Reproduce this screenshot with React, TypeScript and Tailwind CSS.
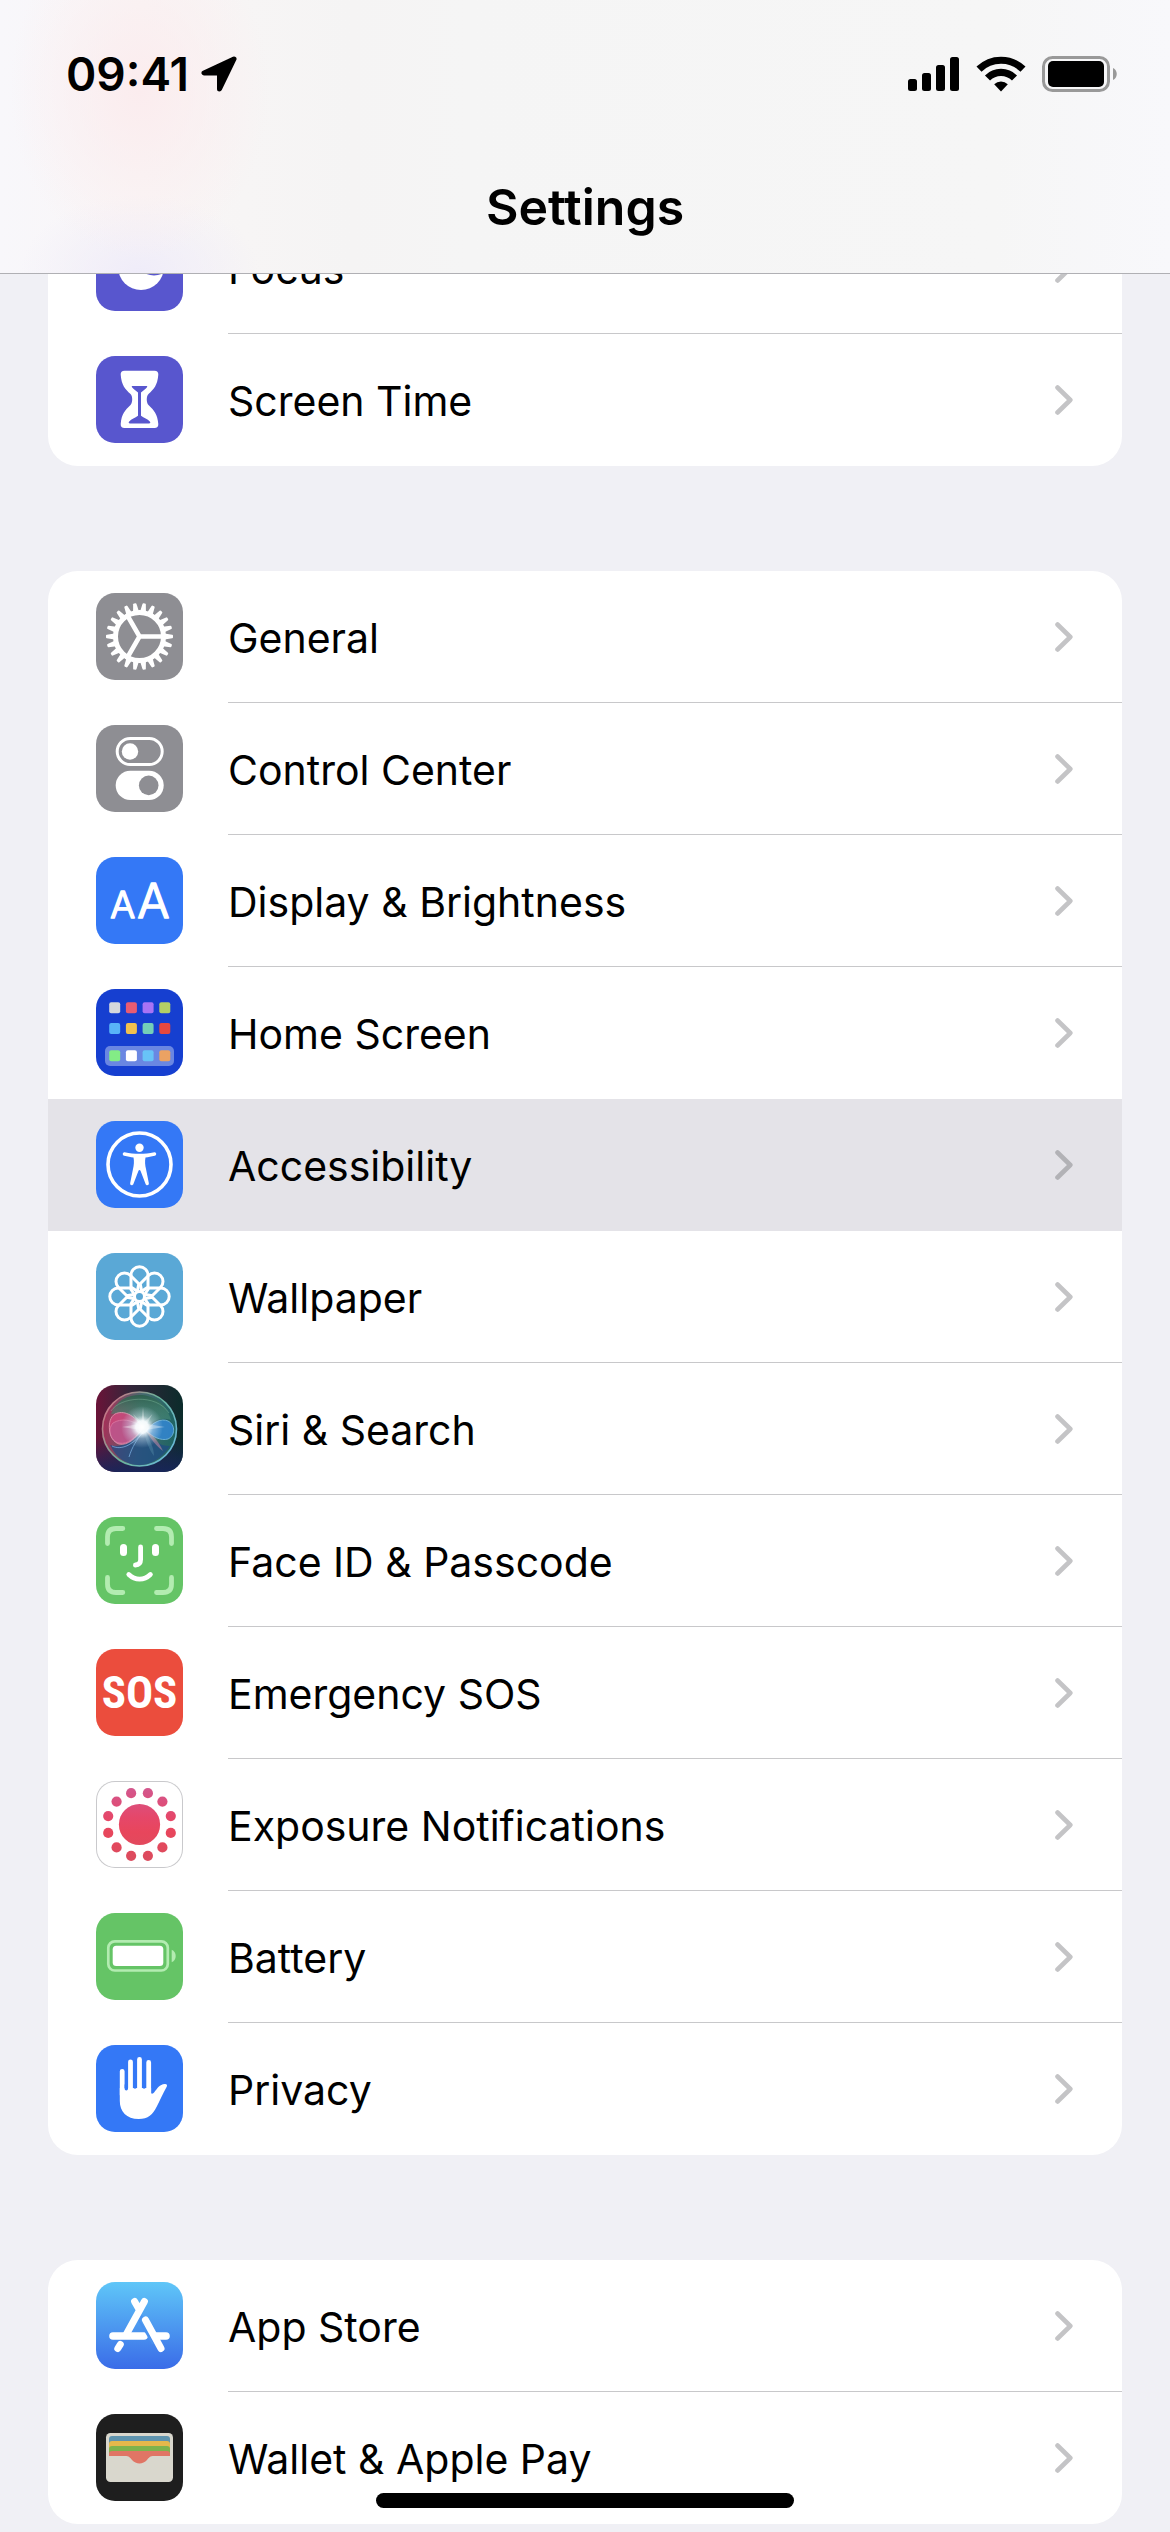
import type { ReactNode } from "react";

type Row = {
  label: string;
  icon: ReactNode;
  pressed?: boolean;
  divider?: boolean;
};

const TEETH = Array.from({ length: 22 }, (_, i) => (i * 360) / 22);
const PETALS = [0, 45, 90, 135, 180, 225, 270, 315];
const DOTS = Array.from({ length: 12 }, (_, i) => ((15 + i * 30) * Math.PI) / 180);

const homeTiles = [
  ["#d5d8dc", "#e85c72", "#a873f5", "#b3cf66"],
  ["#58b4f8", "#f2c14e", "#74cfb8", "#e5483f"],
  ["#83ec86", "#ffffff", "#68c3f7", "#eba263"],
];

// Every icon is drawn on an 87 unit tile
function Tile({ fill, children }: { fill: string; children?: ReactNode }) {
  return (
    <svg viewBox="0 0 87 87" className="mt-[22px] size-[87px] shrink-0" aria-hidden="true">
      <rect width="87" height="87" rx="19" fill={fill} />
      {children}
    </svg>
  );
}

function FocusIcon() {
  return (
    <Tile fill="#5856ce">
      <circle cx="45" cy="43" r="23" fill="#fff" />
      <circle cx="58" cy="32" r="19.5" fill="#5856ce" />
    </Tile>
  );
}

function ScreenTimeIcon() {
  return (
    <Tile fill="#5856ce">
      <path
        fill="#fff"
        d="M28.5 14.7h30c2.600 0 4 1.500 3.800 4C61.500 29 58 33 52.500 38c-2.300 2.200-2.300 8.700 0 10.900C58 54 61.500 58 62.300 68c.2 2.600-1.200 4-3.800 4h-30c-2.600 0-4-1.400-3.800-4C25.500 58 29 54 34.500 48.900c2.300-2.200 2.300-8.700 0-10.900C29 33 25.500 29 24.700 18.700c-.2-2.500 1.200-4 3.800-4z"
      />
      <path
        fill="#5856ce"
        d="M36.500 30h14c.8 0 1 .7.500 1.300-1.800 2.200-4 3.700-6 5.200v23.200c3 2 6.500 3.300 8.800 5.800.9 1 .5 2-.8 2H34c-1.300 0-1.700-1-.8-2 2.300-2.500 5.800-3.800 8.800-5.800V36.500c-2-1.500-4.200-3-6-5.200-.5-.6-.3-1.300.5-1.300z"
      />
    </Tile>
  );
}

function GeneralIcon() {
  return (
    <Tile fill="#8e8e93">
      <g fill="#fff">
        {TEETH.map((deg) => (
          <path key={deg} d="M68.500 40.600l7.700 1.200q.8.200.8 1v1.400q0 .8-.8 1l-7.700 1.200z" transform={`rotate(${deg} 43.500 43.500)`} />
        ))}
      </g>
      <g fill="none" stroke="#fff" strokeWidth="4.600">
        <circle cx="43.500" cy="43.500" r="24" strokeWidth="5" />
        <path d="M43.500 43.500H67M43.500 43.500L31.700 23M43.500 43.500L31.700 64" />
      </g>
    </Tile>
  );
}

function ControlCenterIcon() {
  return (
    <Tile fill="#8e8e93">
      <rect x="21.200" y="13.500" width="45" height="26" rx="13" fill="none" stroke="#fff" strokeWidth="3" />
      <circle cx="34" cy="26.500" r="8.200" fill="#fff" />
      <rect x="19.700" y="45.700" width="48" height="29.300" rx="14.600" fill="#fff" />
      <circle cx="52.700" cy="60.400" r="9.800" fill="#8e8e93" />
    </Tile>
  );
}

function DisplayIcon() {
  return (
    <Tile fill="#3478f6">
      <g
        fill="#fff"
        stroke="#fff"
        strokeWidth="1.600"
        strokeLinejoin="round"
        textAnchor="middle"
        fontWeight="300"
        fontFamily="Inter, sans-serif"
      >
        <text x="26.800" y="61" fontSize="37">A</text>
        <text x="57.300" y="61" fontSize="48">A</text>
      </g>
    </Tile>
  );
}

function HomeScreenIcon() {
  return (
    <Tile fill="#163fd0">
      <rect x="9" y="57" width="69" height="20" rx="5" fill="#6a87e2" />
      {homeTiles.map((row, r) =>
        row.map((color, c) => (
          <rect key={`${r}-${c}`} x={13.2 + c * 16.7} y={[13.2, 34, 61.2][r]} width="11" height="11" rx="2" fill={color} />
        )),
      )}
    </Tile>
  );
}

function AccessibilityIcon() {
  return (
    <Tile fill="#3478f6">
      <circle cx="43.500" cy="43.500" r="31.500" fill="none" stroke="#fff" strokeWidth="3.600" />
      <circle cx="43.500" cy="26.800" r="4.200" fill="#fff" />
      <path
        fill="#fff"
        d="M28.700 31.300c5 1 9.500 1.500 14.800 1.500s9.800-.5 14.800-1.500c2.200-.4 2.700 2.900.5 3.400-3.500.9-6.500 1.400-9.300 1.800-.8 3.500-.4 8 .5 11.500l2.800 14c.5 2.500-2.600 3.200-3.300.8L44.600 50c-.4-1.400-1.800-1.400-2.200 0l-4.900 12.800c-.8 2.400-3.800 1.700-3.300-.8L37 48c.9-3.500 1.300-8 .5-11.500-2.800-.4-5.800-.9-9.300-1.800-2.200-.5-1.700-3.800.5-3.400z"
      />
    </Tile>
  );
}

function WallpaperIcon() {
  return (
    <Tile fill="#5aa8d6">
      <g fill="none" stroke="#fff" strokeWidth="3" strokeLinejoin="round">
        {PETALS.map((deg) => (
          <path
            key={deg}
            d="M42 38.700L35 34V22.300a8.500 8.500 0 0 1 17 0V34L45 38.700"
            transform={`rotate(${deg} 43.500 43.500)`}
          />
        ))}
        <circle cx="43.500" cy="43.500" r="5" />
      </g>
    </Tile>
  );
}

function SiriIcon() {
  return (
    <Tile fill="url(#siri-bg)">
      <defs>
        <linearGradient id="siri-bg" x1="0" y1="0.400" x2="1" y2="0.400">
          <stop offset="0" stopColor="#6b1338" />
          <stop offset="0.400" stopColor="#33263a" />
          <stop offset="1" stopColor="#0b2c2b" />
        </linearGradient>
        <linearGradient id="siri-floor" x1="0" y1="0" x2="0" y2="1">
          <stop offset="0.600" stopColor="#17255c" stopOpacity="0" />
          <stop offset="1" stopColor="#17255c" stopOpacity="0.900" />
        </linearGradient>
        <linearGradient id="siri-orb" x1="0" y1="0.400" x2="1" y2="0.500">
          <stop offset="0" stopColor="#a82f58" />
          <stop offset="0.500" stopColor="#456a6f" />
          <stop offset="1" stopColor="#1d6462" />
        </linearGradient>
        <linearGradient id="siri-rim" x1="0" y1="0.200" x2="1" y2="0.800">
          <stop offset="0" stopColor="#cf6f84" />
          <stop offset="0.500" stopColor="#69b39a" />
          <stop offset="1" stopColor="#6ab9dc" />
        </linearGradient>
        <linearGradient id="siri-top" x1="0" y1="0" x2="0" y2="1">
          <stop offset="0" stopColor="#2b5e4b" stopOpacity="0.900" />
          <stop offset="1" stopColor="#5fa98d" stopOpacity="0.300" />
        </linearGradient>
        <radialGradient id="siri-glow">
          <stop offset="0" stopColor="#fff" />
          <stop offset="0.300" stopColor="#f6fcff" stopOpacity="0.950" />
          <stop offset="0.550" stopColor="#d9ebf5" stopOpacity="0.450" />
          <stop offset="1" stopColor="#cfe8ff" stopOpacity="0" />
        </radialGradient>
      </defs>
      <rect width="87" height="87" rx="19" fill="url(#siri-floor)" />
      <circle cx="43.500" cy="44" r="37" fill="url(#siri-orb)" stroke="url(#siri-rim)" strokeWidth="1.600" />
      <path d="M15 29C20 15 32 10 44 10s26 7 31 25c-8-3-18 0-28 8C39 32 27 26 15 29z" fill="url(#siri-top)" />
      <path d="M14 60c11 4 22-4 34-16 8 11 15 17 26 17C66 73 55 80 43 80S20 73 14 60z" fill="#1e4a86" opacity="0.700" />
      <path d="M15 26C24 12 60 8 73 28" fill="none" stroke="#7fb79c" strokeWidth="0.900" opacity="0.500" />
      <path d="M47 43C38 29 27 25 19 29c-9 5-7 27 4 30 9 2 17-6 24-16z" fill="#d6497f" opacity="0.800" stroke="#f3a4bb" strokeWidth="0.900" />
      <path d="M47 43C36 34 25 33 17 38c-6 7-3 18 6 20 9 2 17-6 24-15z" fill="#b2639c" opacity="0.450" stroke="#f0a8cd" strokeWidth="0.900" />
      <path d="M50 46c7-9 15-13 22-10 8 4 7 15 0 18-7 2-15-2-22-8z" fill="#3387d4" opacity="0.850" stroke="#7fc4ee" strokeWidth="0.900" />
      <path d="M16 61c10 5 22-2 32-15M33 72c3-10 8-18 15-26" fill="none" stroke="#7fb6e8" strokeWidth="1" opacity="0.700" />
      <path d="M50 45c7 5 13 12 17 21-8-6-13-13-17-21z" fill="#c98aa4" opacity="0.550" />
      <path d="M48 44c6 12 10 18 10 27-6-8-9-18-10-27z" fill="#79b3c9" opacity="0.250" />
      <circle cx="46" cy="42" r="21" fill="url(#siri-glow)" />
      <path d="M47 22l1.500 15 8-8-5.500 10 18 3-17 2.500-5 5-5-5-16-2.500 17-3-6-10 8.500 8z" fill="#fff" opacity="0.350" />
    </Tile>
  );
}

function FaceIdIcon() {
  return (
    <Tile fill="#65c466">
      <g fill="none" strokeLinecap="round" strokeWidth="4.800">
        <path
          stroke="#b3ecb1"
          d="M11.500 26.500V20q0-8.500 8.500-8.500h6.800M60.500 11.500H67q8.500 0 8.500 8.500v6.500M75.500 60.500V67q0 8.500-8.500 8.500h-6.500M26.800 75.500H20q-8.500 0-8.500-8.500v-6.500"
        />
        <path stroke="#fff" d="M44.600 30v12.500q0 5.200-5.200 5.500M32.800 57.500c6.500 6.200 15.200 6.200 21.600 0" />
      </g>
      <rect x="24" y="27" width="7" height="12" rx="3.500" fill="#fff" />
      <rect x="56" y="27" width="7" height="12" rx="3.500" fill="#fff" />
    </Tile>
  );
}

function SosIcon() {
  return (
    <Tile fill="#eb4d3d">
      <text
        x="43.500"
        y="59"
        fontSize="45"
        fontWeight="700"
        textAnchor="middle"
        fill="#fff"
        fontFamily="'Liberation Sans Narrow', 'Roboto Condensed', Roboto, sans-serif"
      >
        SOS
      </text>
    </Tile>
  );
}

function ExposureIcon() {
  return (
    <Tile fill="#c9c9cc">
      <defs>
        <linearGradient id="exposure" gradientUnits="userSpaceOnUse" x1="0" y1="6" x2="0" y2="81">
          <stop offset="0" stopColor="#d2588f" />
          <stop offset="0.400" stopColor="#e5476a" />
          <stop offset="0.600" stopColor="#e8465c" />
          <stop offset="1" stopColor="#da4c5e" />
        </linearGradient>
      </defs>
      <rect x="1" y="1" width="85" height="85" rx="18" fill="#fff" />
      <g fill="url(#exposure)">
        <circle cx="43.500" cy="43.500" r="20.600" />
        {DOTS.map((a) => (
          <circle key={a} cx={43.5 + 32.4 * Math.cos(a)} cy={43.5 + 32.4 * Math.sin(a)} r="5.100" />
        ))}
      </g>
    </Tile>
  );
}

function BatteryIcon() {
  return (
    <Tile fill="#65c466">
      <rect x="12.300" y="28.300" width="59.500" height="29.200" rx="6.500" fill="none" stroke="#b3ecb1" strokeWidth="2.700" />
      <rect x="16.700" y="32.800" width="50.600" height="20.200" rx="3.500" fill="#fff" />
      <path d="M75.700 36.700c5.300 2 5.300 10.600 0 12.600z" fill="#b3ecb1" />
    </Tile>
  );
}

function PrivacyIcon() {
  return (
    <Tile fill="#3478f6">
      <path d="M26.200 50V26.300M34.500 50V16.800M43.500 50V14.500M52.700 50V17.500" stroke="#fff" strokeWidth="4.800" strokeLinecap="round" />
      <path
        fill="#fff"
        d="M23.800 43h31.300v5.300c1 1 2.200.3 3.200-1 3-4 5.200-7.800 10.500-8.300 1.800-.2 2.800 1 1.900 2.700C67 48.500 64 55 60.800 61.500 57 69.500 52 74 42.800 74 30.500 74 23.800 66.500 23.800 56z"
      />
      <path d="M30.300 40v3.800M39 40v2M48.100 40v2" stroke="#3478f6" strokeWidth="3.400" strokeLinecap="round" />
    </Tile>
  );
}

function AppStoreIcon() {
  return (
    <Tile fill="url(#app-store)">
      <defs>
        <linearGradient id="app-store" x1="0" y1="0" x2="0" y2="1">
          <stop offset="0" stopColor="#5fc6f8" />
          <stop offset="1" stopColor="#3a6ce8" />
        </linearGradient>
      </defs>
      <g fill="none" stroke="#fff" strokeWidth="7" strokeLinecap="round">
        <path d="M38.600 19.500l4 7M48.400 19.500L30.500 52" />
        <path d="M49.500 38l15.500 28.500M24.300 62.500L21.800 66.500" />
        <path d="M17 54h31M60 54h10" strokeWidth="7.600" />
      </g>
      <path d="M46.300 33.500L43.200 39 57 62" fill="none" stroke="#4a92f0" strokeWidth="1.800" />
    </Tile>
  );
}

function WalletIcon() {
  return (
    <Tile fill="#1e1e1e">
      <rect x="10" y="19" width="67" height="49" rx="4.500" fill="#d9d7cd" />
      <path d="M13 42V25q0-3 3-3h55q3 0 3 3v17z" fill="#5f94ae" />
      <path d="M13 42V30q0-3 3-3h55q3 0 3 3v12z" fill="#e5b84b" />
      <path d="M13 42V35q0-3 3-3h55q3 0 3 3v7z" fill="#7eb34c" />
      <path d="M13 42v-2q0-3 3-3h55q3 0 3 3v2H58c-4 0-5 1.500-7 4-4 4.500-11 4.500-15 0-2-2.500-3-4-7-4z" fill="#e07565" />
    </Tile>
  );
}

const groups: Row[][] = [
  [
    { label: "Focus", icon: <FocusIcon />, divider: true },
    { label: "Screen Time", icon: <ScreenTimeIcon /> },
  ],
  [
    { label: "General", icon: <GeneralIcon />, divider: true },
    { label: "Control Center", icon: <ControlCenterIcon />, divider: true },
    { label: "Display & Brightness", icon: <DisplayIcon />, divider: true },
    { label: "Home Screen", icon: <HomeScreenIcon /> },
    { label: "Accessibility", icon: <AccessibilityIcon />, pressed: true },
    { label: "Wallpaper", icon: <WallpaperIcon />, divider: true },
    { label: "Siri & Search", icon: <SiriIcon />, divider: true },
    { label: "Face ID & Passcode", icon: <FaceIdIcon />, divider: true },
    { label: "Emergency SOS", icon: <SosIcon />, divider: true },
    { label: "Exposure Notifications", icon: <ExposureIcon />, divider: true },
    { label: "Battery", icon: <BatteryIcon />, divider: true },
    { label: "Privacy", icon: <PrivacyIcon /> },
  ],
  [
    { label: "App Store", icon: <AppStoreIcon />, divider: true },
    { label: "Wallet & Apple Pay", icon: <WalletIcon /> },
  ],
];

function StatusBar() {
  return (
    <div className="flex items-center justify-between pt-11 pr-[52px] pl-[66px]">
      <div className="flex items-center gap-3">
        <span className="text-[46px] leading-[60px] font-semibold">09:41</span>
        <svg viewBox="0 0 36 36" className="size-9" aria-hidden="true">
          <path
            d="M33 3L3 17h15.500V33z"
            stroke="#000"
            strokeWidth="5"
            strokeLinejoin="round"
          />
        </svg>
      </div>
      <div className="flex items-center gap-4">
        <svg viewBox="0 0 52 38" className="h-[38px] w-[52px]" aria-hidden="true">
          <rect x="0" y="24" width="9" height="12" rx="2.500" />
          <rect x="14" y="18" width="9" height="18" rx="2.500" />
          <rect x="28" y="10" width="9" height="26" rx="2.500" />
          <rect x="42" y="2" width="9" height="34" rx="2.500" />
        </svg>
        <svg viewBox="0 0 50 38" className="h-[38px] w-[50px]" aria-hidden="true">
          <g fill="none" stroke="#000" strokeWidth="7.200">
            <path d="M3 14.200a31.500 31.500 0 0 1 44 0" />
            <path d="M11.500 23a19.200 19.200 0 0 1 27 0" />
          </g>
          <path d="M25 36.500l-6.800-7.200a9.800 9.800 0 0 1 13.600 0z" />
        </svg>
        <svg viewBox="0 0 76 38" className="h-[38px] w-[76px]" aria-hidden="true">
          <rect x="1.500" y="2.500" width="65" height="33" rx="9" fill="none" stroke="#999" strokeWidth="3" />
          <rect x="6" y="6" width="56" height="26" rx="5" />
          <path d="M71 13c5 2 5 10 0 12z" fill="#999" />
        </svg>
      </div>
    </div>
  );
}

function SettingsRow({ row }: { row: Row }) {
  return (
    <li>
      <a href="#" className={`flex items-start pl-12 ${row.pressed ? "bg-[#e4e3e8] text-[#b2b2b6]" : "text-[#c4c4c6]"}`}>
        {row.icon}
        <span
          className={`ml-[45px] flex h-[132px] flex-1 items-center justify-between border-b pr-[49px] ${
            row.divider ? "border-[#c8c8ca]" : "border-transparent"
          }`}
        >
          <span className="pt-[2px] text-[41px] leading-[56px] text-black">{row.label}</span>
          <svg viewBox="0 0 18 30" className="h-[30px] w-[18px]" fill="none" aria-hidden="true">
            <path d="M2.500 2.500L15.300 15 2.500 27.500" stroke="currentColor" strokeWidth="4.600" strokeLinecap="round" strokeLinejoin="round" />
          </svg>
        </span>
      </a>
    </li>
  );
}

export default function App() {
  return (
    <div className="min-h-screen bg-[#f0f0f5] font-['Inter',sans-serif] text-black">
      <header className="relative z-10 border-b border-[#b0b0b4] bg-[#f6f6f6] bg-[radial-gradient(130px_170px_at_140px_90px,#fbecee_0%,#fbecee00_100%),radial-gradient(120px_80px_at_140px_274px,#efecf9_0%,#efecf900_100%),linear-gradient(90deg,#f8f7fb_0%,#f9f6f6_12%,#f5f4f4_30%,#f5f5f5_40%,#f6f6f6_85%,#f8f8fb_100%)] pb-[35px]">
        <StatusBar />
        <h1 className="pt-[72px] text-center text-[50px] leading-[62px] font-semibold">Settings</h1>
      </header>

      <main className="-mt-[72px] flex flex-col gap-[105px] px-12 pb-2">
        {groups.map((rows) => (
          <ul key={rows[0].label} className="overflow-hidden rounded-[30px] bg-white">
            {rows.map((row) => (
              <SettingsRow key={row.label} row={row} />
            ))}
          </ul>
        ))}
      </main>

      {/* Home indicator */}
      <div className="fixed bottom-6 left-1/2 z-20 h-[15px] w-[418px] -translate-x-1/2 rounded-full bg-black" />
    </div>
  );
}
